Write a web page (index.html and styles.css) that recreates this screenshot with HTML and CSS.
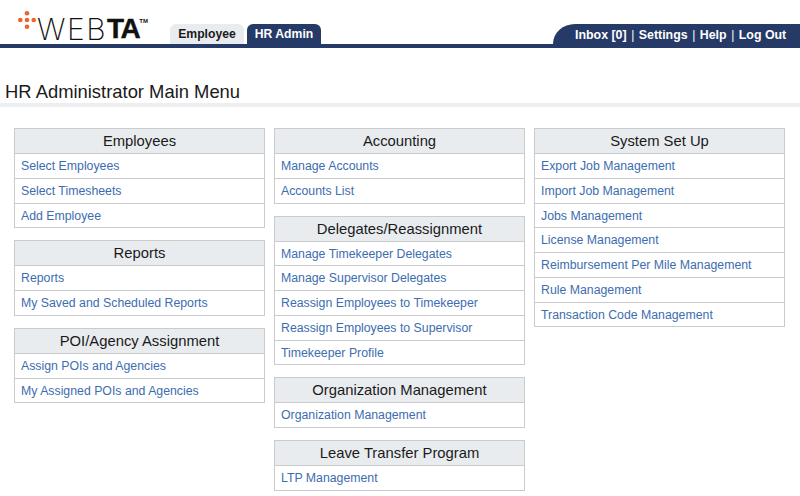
FILE: index.html
```html
<!DOCTYPE html>
<html lang="en">
<head>
  <meta charset="UTF-8" />
  <title>HR Administrator Main Menu</title>
  <link rel="stylesheet" href="styles.css">
</head>
<body>
  <header class="topbar">
    <div class="logo">
      <svg class="logo-dots" width="20" height="20" viewBox="0 0 20 20">
        <circle cx="10" cy="3.3" r="2.3" fill="#f0622d"/>
        <circle cx="3.3" cy="10" r="2.3" fill="#f0622d"/>
        <circle cx="10" cy="10" r="2.3" fill="#f0622d"/>
        <circle cx="16.7" cy="10" r="2.3" fill="#f0622d"/>
        <circle cx="10" cy="16.7" r="2.3" fill="#f0622d"/>
      </svg>
      <span class="logo-web">WEB</span><span class="logo-ta">TA</span><span class="logo-tm">TM</span>
    </div>
    <nav class="tabs">
      <a class="tab">Employee</a>
      <a class="tab active">HR Admin</a>
    </nav>
    <nav class="usernav">
      <a>Inbox [0]</a><span class="sep">|</span><a>Settings</a><span class="sep">|</span><a>Help</a><span class="sep">|</span><a>Log Out</a>
    </nav>
  </header>

  <h1>HR Administrator Main Menu</h1>

  <main class="columns">
    <div class="column">
      <section class="menu">
        <h2>Employees</h2>
        <a>Select Employees</a>
        <a>Select Timesheets</a>
        <a>Add Employee</a>
      </section>
      <section class="menu">
        <h2>Reports</h2>
        <a>Reports</a>
        <a>My Saved and Scheduled Reports</a>
      </section>
      <section class="menu">
        <h2>POI/Agency Assignment</h2>
        <a>Assign POIs and Agencies</a>
        <a>My Assigned POIs and Agencies</a>
      </section>
    </div>
    <div class="column">
      <section class="menu">
        <h2>Accounting</h2>
        <a>Manage Accounts</a>
        <a>Accounts List</a>
      </section>
      <section class="menu">
        <h2>Delegates/Reassignment</h2>
        <a>Manage Timekeeper Delegates</a>
        <a>Manage Supervisor Delegates</a>
        <a>Reassign Employees to Timekeeper</a>
        <a>Reassign Employees to Supervisor</a>
        <a>Timekeeper Profile</a>
      </section>
      <section class="menu">
        <h2>Organization Management</h2>
        <a>Organization Management</a>
      </section>
      <section class="menu">
        <h2>Leave Transfer Program</h2>
        <a>LTP Management</a>
      </section>
    </div>
    <div class="column">
      <section class="menu">
        <h2>System Set Up</h2>
        <a>Export Job Management</a>
        <a>Import Job Management</a>
        <a>Jobs Management</a>
        <a>License Management</a>
        <a>Reimbursement Per Mile Management</a>
        <a>Rule Management</a>
        <a>Transaction Code Management</a>
      </section>
    </div>
  </main>
</body>
</html>
```

FILE: styles.css
```css
:root {
  --navy: #253a66;
  --link: #3d6db0;
  --border: #c9cbcc;
  --head-bg: #e9ecef;
}
body {
  margin: 0;
  font-family: "Liberation Sans", Arial, sans-serif;
  background: #fff;
  color: #1a1a1a;
}
.topbar {
  display: flex;
  align-items: flex-end;
  height: 44px;
  border-bottom: 4px solid var(--navy);
}
.logo {
  display: flex;
  align-items: flex-start;
  width: 170px;
  height: 30px;
  padding-left: 17px;
  box-sizing: border-box;
  color: #111;
}
.logo-dots { margin-top: -4px; flex: none; }
.logo-web { font-size: 30px; line-height: 30px; font-family: "Inter", "Liberation Sans", sans-serif; font-weight: 200; letter-spacing: 1.5px; }
.logo-ta { font-size: 28px; line-height: 30px; font-weight: 700; letter-spacing: -1.5px; -webkit-text-stroke: 0.4px #111; }
.logo-tm { font-size: 6px; line-height: 8px; font-weight: 700; margin: 3px 0 0; }
.tabs { display: flex; gap: 3px; }
.tab {
  width: 74px;
  height: 20px;
  line-height: 21px;
  text-align: center;
  font-size: 12.2px;
  font-weight: 700;
  background: var(--head-bg);
  border-radius: 6px 6px 0 0;
}
.tab.active { background: var(--navy); color: #fff; }
.usernav {
  margin-left: auto;
  display: flex;
  align-items: center;
  height: 20px;
  width: 247px;
  padding: 1px 0 0 22px;
  box-sizing: border-box;
  background: var(--navy);
  color: #fff;
  font-size: 12.4px;
  font-weight: 700;
  border-top-left-radius: 22px 20px;
}
.sep { font-weight: 400; margin: 0 4.5px; font-size: 12px; }
h1 {
  margin: 33px 0 0;
  padding-left: 5px;
  font-size: 18.4px;
  line-height: 22px;
  font-weight: 400;
  border-bottom: 4px solid #eceef0;
}
.columns {
  display: grid;
  grid-template-columns: repeat(3, 251px);
  gap: 9px;
  padding: 21px 0 0 14px;
  align-items: start;
}
.column { display: flex; flex-direction: column; gap: 12px; }
.menu { border: 1px solid var(--border); }
.menu h2 {
  margin: 0;
  height: 24px;
  line-height: 25px;
  background: var(--head-bg);
  text-align: center;
  font-size: 14.8px;
  font-weight: 400;
}
.menu a {
  display: block;
  height: 23.75px;
  line-height: 24px;
  padding-left: 6px;
  border-top: 1px solid var(--border);
  color: var(--link);
  font-size: 12.3px;
}
```
